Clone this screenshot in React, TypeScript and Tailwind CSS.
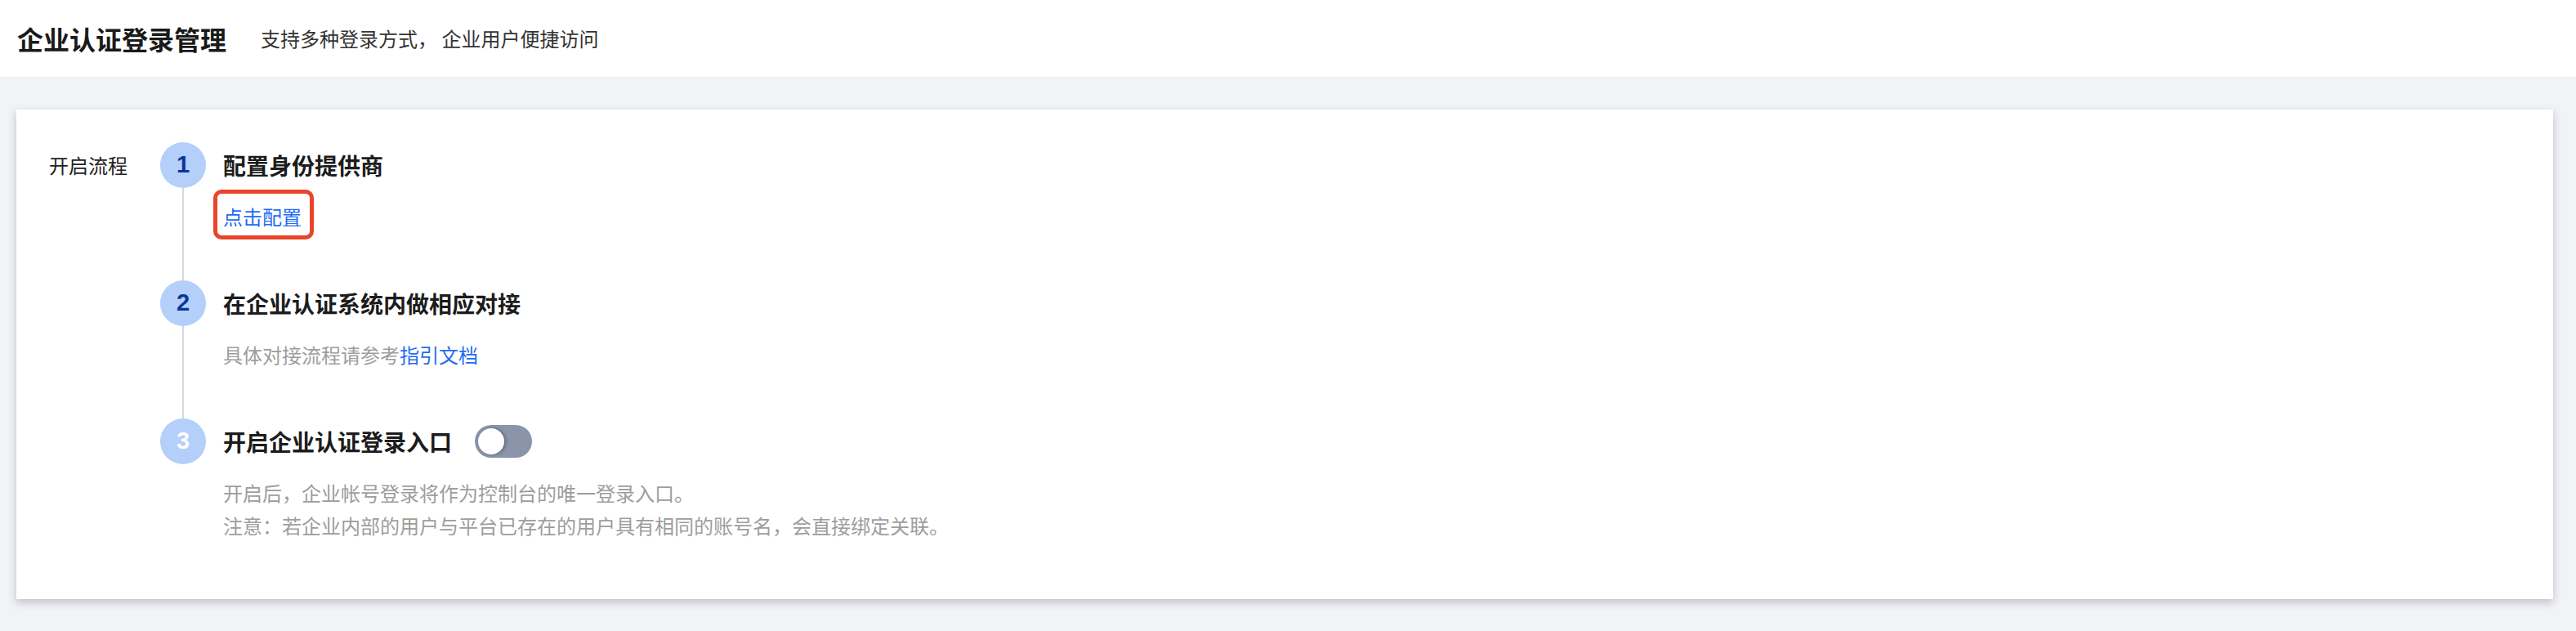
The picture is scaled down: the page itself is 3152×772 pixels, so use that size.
import React from "react";

const FONT = { fontFamily: '"Noto Sans CJK SC", "Noto Sans", sans-serif' };

function StepCircle({ n, light }: { n: number; light?: boolean }) {
  return (
    <div
      className={`flex h-[56px] w-[56px] shrink-0 items-center justify-center rounded-full bg-[#b3cffa] text-[29px] font-bold ${
        light ? "text-white" : "text-[#0c3597]"
      }`}
      style={{ fontFamily: '"Liberation Sans", Arial, sans-serif' }}
    >
      {n}
    </div>
  );
}

function Step({
  n,
  title,
  last,
  light,
  extra,
  children,
}: {
  n: number;
  title: string;
  last?: boolean;
  light?: boolean;
  extra?: React.ReactNode;
  children: React.ReactNode;
}) {
  return (
    <div className="flex gap-[21px]">
      <div className="flex w-[56px] shrink-0 flex-col items-center">
        <StepCircle n={n} light={light} />
        {!last && <div className="w-[2px] flex-1 bg-[#d3d7df]" />}
      </div>
      <div className={last ? "pb-0" : "pb-[58px]"}>
        <div className="flex h-[56px] items-center gap-[28px]">
          <span className="text-[28px] font-bold leading-[56px] text-[#1c1c1c]">{title}</span>
          {extra}
        </div>
        <div className="mt-[15px] text-[24px] leading-[40px] text-[#9d9d9d]">{children}</div>
      </div>
    </div>
  );
}

export default function App() {
  return (
    <div className="min-h-[772px] w-full bg-[#f2f3f7]" style={FONT}>
      <header className="flex h-[94px] items-center gap-[42px] bg-white pl-[21px]">
        <h1 className="text-[32px] font-bold leading-[40px] text-[#1a1a1a]">企业认证登录管理</h1>
        <span className="text-[24px] leading-[36px] text-[#333333]">支持多种登录方式， 企业用户便捷访问</span>
      </header>

      <div className="ml-[20px] mr-[28px] mt-[40px] h-[599px] bg-white pl-[40px] pt-[40px] shadow-[0_4px_10px_rgba(54,58,80,0.28)]">
        <div className="flex">
          <div className="w-[136px] shrink-0 pt-[8px] text-[24px] leading-[40px] text-[#222222]">开启流程</div>
          <div className="flex flex-col">
            <Step n={1} title="配置身份提供商">
              <span className="relative inline-block">
                <span className="text-[#1f6bf5]">点击配置</span>
                <span className="pointer-events-none absolute -bottom-[8px] -left-[12px] -right-[15px] -top-[13px] rounded-[10px] border-[5px] border-[#ea442b]" />
              </span>
            </Step>
            <Step n={2} title="在企业认证系统内做相应对接">
              具体对接流程请参考<span className="text-[#1f6bf5]">指引文档</span>
            </Step>
            <Step
              n={3}
              title="开启企业认证登录入口"
              last
              light
              extra={
                <div className="flex h-[40px] w-[70px] items-center rounded-full bg-[#8a95aa] px-[4px]">
                  <div className="h-[32px] w-[32px] rounded-full bg-white shadow-[2px_0_4px_rgba(0,0,0,0.3)]" />
                </div>
              }
            >
              <div>开启后，企业帐号登录将作为控制台的唯一登录入口。</div>
              <div>注意：若企业内部的用户与平台已存在的用户具有相同的账号名，会直接绑定关联。</div>
            </Step>
          </div>
        </div>
      </div>
    </div>
  );
}
